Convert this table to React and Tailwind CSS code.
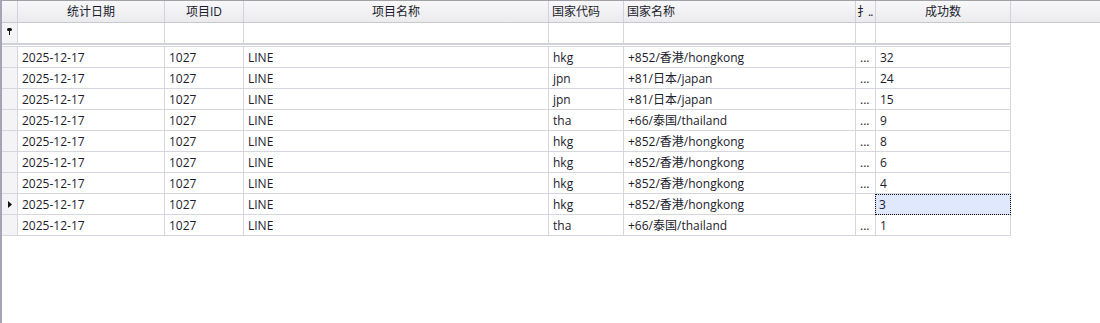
const columns = [
  { key: 'date', title: '统计日期', width: 'w-[147px]', align: 'justify-center' },
  { key: 'pid', title: '项目ID', width: 'w-[79px]', align: 'justify-center' },
  { key: 'name', title: '项目名称', width: 'w-[305px]', align: 'justify-center' },
  { key: 'code', title: '国家代码', width: 'w-[75px]', align: 'justify-start pl-[3px]' },
  { key: 'country', title: '国家名称', width: 'w-[232px]', align: 'justify-start pl-[3px]' },
  { key: 'op', title: '扌..', width: 'w-[20px]', align: 'justify-start pl-[1px] tracking-[-1px]' },
  { key: 'ok', title: '成功数', width: 'w-[135px]', align: 'justify-center' },
];

const rows = [
  { code: 'hkg', country: '+852/香港/hongkong', ok: 32 },
  { code: 'jpn', country: '+81/日本/japan', ok: 24 },
  { code: 'jpn', country: '+81/日本/japan', ok: 15 },
  { code: 'tha', country: '+66/泰国/thailand', ok: 9 },
  { code: 'hkg', country: '+852/香港/hongkong', ok: 8 },
  { code: 'hkg', country: '+852/香港/hongkong', ok: 6 },
  { code: 'hkg', country: '+852/香港/hongkong', ok: 4 },
  { code: 'hkg', country: '+852/香港/hongkong', ok: 3, current: true },
  { code: 'tha', country: '+66/泰国/thailand', ok: 1 },
];

const FilterPin = () => (
  <svg width="5" height="7" viewBox="0 0 5 7">
    <rect x="0" y="0" width="5" height="3" rx="1.5" fill="#111" />
    <rect x="2" y="3" width="1" height="4" fill="#111" />
  </svg>
);

const RowArrow = () => (
  <svg width="4" height="7" viewBox="0 0 4 7">
    <path d="M0 0 L4 3.5 L0 7 Z" fill="#111" />
  </svg>
);

const Cell = ({ width, children, className = '' }) => (
  <div className={`${width} shrink-0 h-full flex items-center border-r border-[#d6d6de] pl-[4px] pt-[2px] whitespace-nowrap overflow-hidden ${className}`}>
    {children}
  </div>
);

export default function App() {
  return (
    <div className="w-[1100px] h-[323px] bg-white border-l-2 border-[#a4a4b6] overflow-hidden text-[12px] text-[#1c1c2c] font-['Open_Sans','Noto_Sans_CJK_SC',sans-serif]">
      {/* header */}
      <div className="flex h-[23px] border-t border-b border-t-[#a2a2a6] border-b-[#c8c8d0] bg-linear-to-b from-[#f8f8fa] to-[#ebebee]">
        <div className="w-[16px] shrink-0 border-r border-[#d2d2da]" />
        {columns.map((c) => (
          <div key={c.key} className={`${c.width} shrink-0 flex items-center border-r border-[#d2d2da] whitespace-nowrap overflow-hidden ${c.align}`}>
            {c.title}
          </div>
        ))}
      </div>

      {/* filter row */}
      <div className="flex w-[1009px] h-[22px] border-b-2 border-[#d0d0d8]">
        <div className="w-[16px] shrink-0 h-full flex items-start justify-center pt-[5px] border-r border-[#d6d6de] bg-[#f4f4f7]">
          <FilterPin />
        </div>
        {columns.map((c) => (
          <div key={c.key} className={`${c.width} shrink-0 h-full border-r border-[#d6d6de]`} />
        ))}
      </div>
      <div className="h-px w-[1009px] bg-white" />

      {/* data rows */}
      <div className="w-[1009px] border-t border-[#d6d6de]">
        {rows.map((r, i) => (
          <div key={i} className="flex h-[21px] border-b border-[#d6d6de]">
            <div className="w-[16px] shrink-0 h-full flex items-center justify-center pt-px border-r border-[#d6d6de] bg-[#f4f4f7]">
              {r.current && <RowArrow />}
            </div>
            <Cell width="w-[147px]">2025-12-17</Cell>
            <Cell width="w-[79px]">1027</Cell>
            <Cell width="w-[305px]">LINE</Cell>
            <Cell width="w-[75px]">{r.code}</Cell>
            <Cell width="w-[232px]">{r.country}</Cell>
            <Cell width="w-[20px]" className="pl-[4px] text-[#222]">{r.current ? '' : '...'}</Cell>
            {r.current ? (
              <div className="relative w-[135px] shrink-0 h-full flex items-center pl-[3px] pt-[2px] bg-[#dfe8fc] border-r border-[#d6d6de]">
                <div className="absolute left-[-1px] right-[-1px] top-0 bottom-[-1px] border border-dotted border-[#111]" />
                {r.ok}
              </div>
            ) : (
              <Cell width="w-[135px]" className="pl-[3px]">{r.ok}</Cell>
            )}
          </div>
        ))}
      </div>
    </div>
  );
}
